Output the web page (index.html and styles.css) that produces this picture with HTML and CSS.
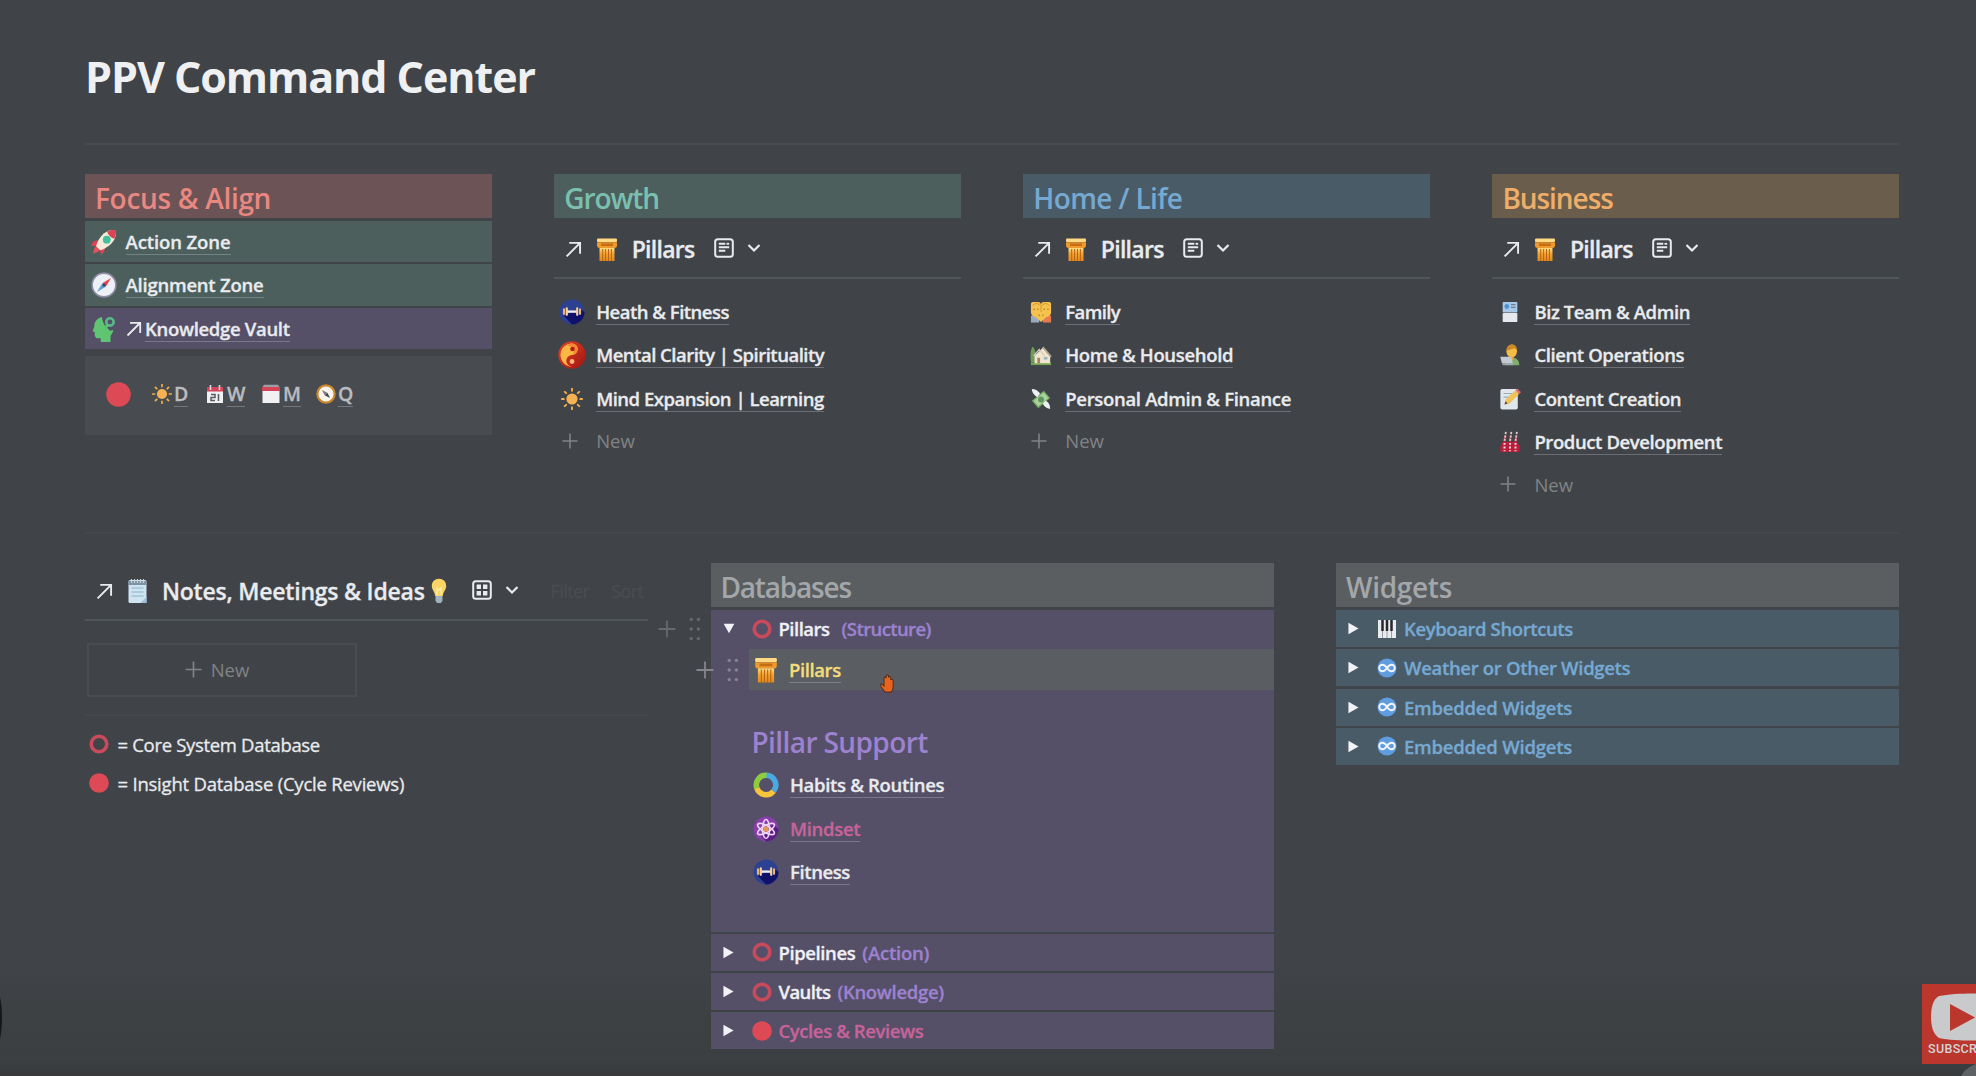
FILE: index.html
```html
<!DOCTYPE html>
<html lang="en">
<head>
<meta charset="utf-8">
<title>PPV Command Center</title>
<link rel="stylesheet" href="styles.css">
</head>
<body>
<svg class="defs" aria-hidden="true">
  <defs>
    <linearGradient id="gold" x1="0" y1="0" x2="0" y2="1"><stop offset="0" stop-color="#ffdc80"/><stop offset=".45" stop-color="#f3a32f"/><stop offset="1" stop-color="#e48a1c"/></linearGradient>
    <linearGradient id="yinred" x1="0" y1="0" x2="1" y2="1"><stop offset="0" stop-color="#e8442a"/><stop offset="1" stop-color="#9d1410"/></linearGradient>
  </defs>
  <symbol id="arrow" viewBox="0 0 16 16"><path d="M1.5 14.5 14 2M4 1.8h10.2V12" fill="none" stroke="currentColor" stroke-width="1.8"/></symbol>
  <symbol id="chev" viewBox="0 0 14 10"><path d="M1.5 2 7 7.5 12.5 2" fill="none" stroke="currentColor" stroke-width="2.2"/></symbol>
  <symbol id="plus" viewBox="0 0 18 18"><path d="M9 .5v17M.5 9h17" fill="none" stroke="currentColor" stroke-width="1.8"/></symbol>
  <symbol id="list" viewBox="0 0 20 20"><rect x="1.2" y="1.2" width="17.6" height="17.6" rx="2.6" fill="none" stroke="currentColor" stroke-width="2"/><path d="M4.800 5.800h6.500M4.800 9.300h10.400M4.800 12.800h6.500" stroke="currentColor" stroke-width="1.900"/><path d="M12.500 5.800h2.700" stroke="currentColor" stroke-width="1.900"/></symbol>
  <symbol id="grid" viewBox="0 0 20 20"><rect x="1.2" y="1.2" width="17.6" height="17.6" rx="2.6" fill="none" stroke="currentColor" stroke-width="2"/><path d="M4.6 4.6h4.4V9H4.6zM11 4.6h4.4V9H11zM4.6 11h4.4v4.4H4.6zM11 11h4.4v4.4H11z" fill="currentColor"/></symbol>
  <symbol id="dots" viewBox="0 0 12 24"><g fill="currentColor"><circle cx="2.2" cy="2.4" r="1.7"/><circle cx="9.4" cy="2.4" r="1.7"/><circle cx="2.2" cy="12" r="1.7"/><circle cx="9.4" cy="12" r="1.7"/><circle cx="2.2" cy="21.600" r="1.7"/><circle cx="9.4" cy="21.600" r="1.7"/></g></symbol>
  <symbol id="tri" viewBox="0 0 12 14"><path d="M.5.8 11.5 7 .5 13.2z" fill="#f1f3f6"/></symbol>
  <symbol id="tridown" viewBox="0 0 14 12"><path d="M.8.5h12.4L7 11.5z" fill="#f1f3f6"/></symbol>
  <symbol id="ring" viewBox="0 0 20 20"><circle cx="10" cy="10" r="7.8" fill="none" stroke="#c94a5c" stroke-width="3.6"/></symbol>
  <symbol id="disc" viewBox="0 0 20 20"><circle cx="10" cy="10" r="9.8" fill="#dd4a56"/></symbol>
  <symbol id="pillar" viewBox="0 0 22 24"><rect x="1" y="1" width="20" height="3.6" rx="1" fill="#ffd984"/><path d="M1 4.8h20v3.4a2.6 2.6 0 0 1-2.8 2.4H3.800A2.600 2.600 0 0 1 1 8.200z" fill="#ee9a2c"/><path d="M5 6h12v2.500H5z" fill="#c66c14"/><path d="M3.500 10.500h15V23.500h-15z" fill="url(#gold)"/><path d="M6.700 11.500v12M9.600 11.500v12M12.500 11.500v12M15.400 11.500v12" stroke="#b86315" stroke-width="1"/></symbol>
  <symbol id="rocket" viewBox="0 0 28 28"><path d="M7 12C3 12 1 15 .5 18l6 .5zM15 20c0 4-1.500 6-4 8l-1.500-6z" fill="#dc4453"/><path d="M6 18c-2.500 2-3.500 5-3.500 8 3 0 6-1.500 7.500-4z" fill="#e0525f"/><path d="M26.800 1.200C18 0 11 5 6.500 15l-1 3.500 4.500 4.500 3.500-1.200C23 17 28 10 26.800 1.200z" fill="#f2ead6"/><path d="M26.800 1.200c-4-.5-7 .2-9.500 1.600 1.200 3.800 4 6.600 7.800 7.800 1.500-2.800 2.200-6 1.700-9.400z" fill="#dc4453"/><circle cx="17" cy="11.500" r="4.200" fill="#42bfa0"/></symbol>
  <symbol id="compass" viewBox="0 0 24 24"><circle cx="12" cy="12" r="11" fill="#eef0f8" stroke="#8b8aa0" stroke-width="1.500"/><path d="M18.500 5.500 13.600 13.600l-3.200-3.200z" fill="#e2434f"/><path d="M5.500 18.500 10.400 10.400l3.200 3.200z" fill="#5fa2d8"/><circle cx="12" cy="12" r="1.500" fill="#3a4568"/></symbol>
  <symbol id="head" viewBox="0 0 22 24"><path d="M9 1C5 2 2 5 2 10L.5 14l2 1v3.500l1.500 2h4V24h9v-5.500c1.500-2 2.500-4 2.500-5.500l-3 .5-4-4c-2-2-3-5-3.500-8.500z" fill="#5fc573"/><circle cx="16.500" cy="5.500" r="3.400" fill="none" stroke="#58b98a" stroke-width="2.400"/><path d="m14.500 8-3.500 5" stroke="#5fc573" stroke-width="2.400"/></symbol>
  <symbol id="sun" viewBox="0 0 22 22"><circle cx="11" cy="11" r="5.600" fill="#f5b252"/><path d="M11 .8v2M11 19.200v2M.8 11h2M19.200 11h2M3.800 3.800l1.400 1.400M16.800 16.800l1.400 1.400M3.800 18.200l1.400-1.400M16.800 5.200l1.400-1.400" stroke="#f0b04b" stroke-width="1.900" stroke-linecap="round"/></symbol>
  <symbol id="cal" viewBox="0 0 18 20"><path d="M1 3h16v5H1z" fill="#d64258"/><path d="M1 7.500h16V19H1z" fill="#f0f0f2"/><path d="M4.500 1v5M13.500 1v5" stroke="#dcdde2" stroke-width="1.600"/><path d="M5 10.500h4v3H5v3h4M12.500 10v7" fill="none" stroke="#555b63" stroke-width="1.500"/></symbol>
  <symbol id="tearcal" viewBox="0 0 20 20"><path d="M3 .8h14l2 3H1z" fill="#9aa0a5"/><path d="M1 3h18v4H1z" fill="#d64258"/><path d="M1.500 7h17v12h-17z" fill="#f1f1f3"/></symbol>
  <symbol id="navcomp" viewBox="0 0 22 22"><circle cx="11" cy="11" r="9.500" fill="#fbf5ea" stroke="#c9872f" stroke-width="2.400"/><path d="m6.500 6.500 6 3-3 3z" fill="#777e8d"/><path d="m15.500 15.500-6-3 3-3z" fill="#3f4553"/></symbol>
  <symbol id="gym" viewBox="0 0 26 26"><circle cx="13" cy="13" r="12.500" fill="#2d4193"/><path d="M5 17 20 9l5.500 4A12.500 12.500 0 0 1 13 25.500z" fill="#10126a"/><path d="M8 12.600h10" stroke="#f1ecec" stroke-width="2.400"/><path d="M5 10.400v4.400M21 10.400v4.400" stroke="#e5b375" stroke-width="2.200" stroke-linecap="round"/><path d="M7.800 9.400v6.400M18.200 9.400v6.400" stroke="#f4d29d" stroke-width="2.200" stroke-linecap="round"/></symbol>
  <symbol id="yin" viewBox="0 0 28 28"><circle cx="14" cy="14" r="13.700" fill="url(#yinred)"/><path d="M14 2.500a5.750 5.750 0 0 1 0 11.500 5.750 5.750 0 0 0 0 11.500A11.500 11.500 0 0 1 14 2.500z" fill="#fdb843"/><path d="M9 4.500A5.750 5.750 0 0 1 14 2.500a5.750 5.750 0 0 1 0 11.500c3-2.500 3.500-8-5-9.500z" fill="#f58a35"/><circle cx="14.500" cy="8" r="2.300" fill="#b02018"/><circle cx="14" cy="20.500" r="2.400" fill="#ffb27a"/></symbol>
  <symbol id="family" viewBox="0 0 24 24"><path d="M1 16h9v7.500H1z" fill="#9aaac0"/><path d="M14 16h9v7.500h-9z" fill="#e87a50"/><path d="M3 1h6c2 0 3 1.500 3 3 0-1.500 1-3 3-3h6c1.500 0 2 1 2 2.500V12c0 3-2 5-5 5.500L12 23l-6-5.500C3 17 1 15 1 12V3.500C1 2 1.500 1 3 1z" fill="#f6c24e"/><path d="M3 5c2-3 6-3 7.500-.5M13.500 4.500C15 2 19 2 21 5M12 4v8" stroke="#dd9c30" fill="none" stroke-width="1.200"/><path d="M4.500 9h.1M8.500 9h.1M15.500 9h.1M19.500 9h.1M10 15.500h.1M14 15.500h.1" stroke="#a87226" stroke-width="1.500" stroke-linecap="round"/></symbol>
  <symbol id="house" viewBox="0 0 24 24"><path d="M1 20C0 10 1 5 3 3c3 3 4 8 4 17z" fill="#6f9c58"/><path d="M1 20h22v3H1z" fill="#74a552"/><path d="M5 13 14 4l8 9v8H5z" fill="#f0e5cf"/><path d="m4 13 6-7 6 7" fill="none" stroke="#d5cfc0" stroke-width="1.500"/><path d="M14 3.500 23 14" stroke="#b3a693" stroke-width="2"/><path d="M8 15h3v6H8z" fill="#aa8060"/><path d="M15 14h4v3h-4z" fill="#9db5bd"/></symbol>
  <symbol id="money" viewBox="0 0 24 24"><path d="m2 14 13-11 7 8L9 22z" fill="#77aa6b"/><path d="m4 14 11-9 5 6L9 20z" fill="#a8d49a"/><circle cx="12" cy="12.500" r="3.200" fill="#5f9463"/><path d="M2 1c4 0 7 2 9 5l-3 4C5 8 2 5 2 1zM22 23c-4-1-7-3-8-6l3-3c4 2 5 5 5 9z" fill="#edf0f3"/></symbol>
  <symbol id="idcard" viewBox="0 0 18 24"><rect x="1" y="1" width="16" height="11.500" rx="1" fill="#a9c9ea"/><circle cx="5.500" cy="6" r="2.600" fill="#4f92d4"/><path d="M10 4h5M10 7h5" stroke="#6e7d90" stroke-width="1.500"/><rect x="1" y="13" width="16" height="10" rx="1" fill="#e5e8ee"/></symbol>
  <symbol id="tech" viewBox="0 0 24 26"><path d="M6 25c0-6 3-9 8-9s9 3 9 9z" fill="#7fae6b"/><ellipse cx="14" cy="8.500" rx="6.200" ry="7.800" fill="#f2bc45"/><path d="M8 8c0-9 12-10 12.200-1L17 5z" fill="#c98a24"/><path d="M12 15h4v4h-4z" fill="#e5a73a"/><path d="M.5 15h13l2 8H2.500z" fill="#c3c9d0"/><path d="M3 23h13v2H3z" fill="#9ca5ae"/></symbol>
  <symbol id="memo" viewBox="0 0 24 24"><rect x="1.500" y="1" width="19" height="22.500" rx="2" fill="#dfe6ec"/><path d="M5 6h10M5 10h7" stroke="#9dacb8" stroke-width="1.300"/><path d="m6 18 1.500-6L18 2.500l4 4L11.500 17z" fill="#efc35a"/><path d="m6 18 1-3.500 2.500 2.500z" fill="#5a4a38"/><path d="m18 2.500 2-2 4 4-2 2z" fill="#e36a70"/></symbol>
  <symbol id="factory" viewBox="0 0 22 24"><path d="M5 12 6 5M11 12l1-7M17 12l1-7" stroke="#b02a42" stroke-width="2.600"/><path d="M6.500 1 5 11M12.500 1 11 11M18.500 1 17 11" stroke="#dfc6ca" stroke-width="2" stroke-dasharray="2.500 1.200"/><path d="M3 12h16l2.500 5v6H.5v-6z" fill="#b91f3a"/><path d="M5 13v9M11 13v9M17 13v9" stroke="#f1d9de" stroke-width="2.200" stroke-dasharray="2 2"/></symbol>
  <symbol id="notepad" viewBox="0 0 20 26"><rect x="1" y="2" width="18" height="23" rx="1.500" fill="#cfe3f1"/><path d="M1 3h18v4H1z" fill="#7d93a4"/><path d="M4 1v4M7 1v4M10 1v4M13 1v4M16 1v4" stroke="#c7d2da" stroke-width="1.200"/><path d="M4 10h12M4 14h12M4 18h12" stroke="#8cb3ce" stroke-width="1.200"/><path d="m13 25 6-6v6z" fill="#9cc0dc"/></symbol>
  <symbol id="bulb" viewBox="0 0 16 26"><path d="M8 .8c4.200 0 7.200 3 7.200 7.200 0 4-3 5.500-3.400 10H4.200C3.800 13.500.8 12 .8 8 .8 3.800 3.800.8 8 .8z" fill="#fbd465"/><path d="M6 17V10l2 2 2-2v7" fill="none" stroke="#fff0b0" stroke-width="1.300"/><path d="M4.500 18h7v4.500L10 25H6l-1.500-2.500z" fill="#9fb2bf"/></symbol>
  <symbol id="habit" viewBox="0 0 26 26"><g fill="none" stroke-width="5.600"><path d="M13 3.300A9.700 9.700 0 0 1 20.500 19.200" stroke="#4aa9e0"/><path d="M20.500 19.200A9.700 9.700 0 0 1 3.800 16" stroke="#f6c53c"/><path d="M3.900 16.200A9.700 9.700 0 0 1 13.500 3.300" stroke="#8fcb3f"/></g></symbol>
  <symbol id="atom" viewBox="0 0 26 26"><circle cx="13" cy="13" r="12.500" fill="#8a3eac"/><path d="m8 20 12-12 5.500 5A12.500 12.500 0 0 1 13 25.500z" fill="#5c1d80"/><g fill="none" stroke="#ecd4f6" stroke-width="1.600"><ellipse cx="13" cy="13" rx="3.500" ry="9.500"/><ellipse cx="13" cy="13" rx="3.500" ry="9.500" transform="rotate(60 13 13)"/><ellipse cx="13" cy="13" rx="3.500" ry="9.500" transform="rotate(120 13 13)"/></g><circle cx="13" cy="13" r="2.600" fill="#e7964a"/></symbol>
  <symbol id="piano" viewBox="0 0 20 20"><rect x="1" y="1" width="18" height="18" fill="#e9ebee"/><path d="M5.500 1v11M10 1v11M14.500 1v11" stroke="#26282c" stroke-width="2.500"/><path d="M5.500 12v7M10 12v7M14.500 12v7" stroke="#85898f" stroke-width=".8"/></symbol>
  <symbol id="inf" viewBox="0 0 20 20"><circle cx="10" cy="10" r="9.500" fill="#5f9de0"/><path d="M10 10c-2-3-3-3.200-4.600-3.200a3.200 3.200 0 0 0 0 6.400C7 13.200 8 13 10 10s3-3.200 4.600-3.200a3.200 3.200 0 0 1 0 6.400C13 13.200 12 13 10 10z" fill="none" stroke="#f2f6fc" stroke-width="1.900"/></symbol>
</svg>

<main class="page">
  <h1 class="title">PPV Command Center</h1>

  <section class="board four">
    <div class="col">
      <h2 class="band red">Focus &amp; Align</h2>
      <a class="bar green"><svg class="pic"><use href="#rocket"/></svg><span class="link t1">Action Zone</span></a>
      <a class="bar green mid"><svg class="pic"><use href="#compass"/></svg><span class="link t2">Alignment Zone</span></a>
      <a class="bar purple"><svg class="pic"><use href="#head"/></svg><svg class="mini"><use href="#arrow"/></svg><span class="link t3">Knowledge Vault</span></a>
      <div class="callout">
        <svg class="rec"><use href="#disc"/></svg>
        <span class="cyc"><svg><use href="#sun"/></svg><span>D</span></span>
        <span class="cyc week"><svg><use href="#cal"/></svg><span>W</span></span>
        <span class="cyc month"><svg><use href="#tearcal"/></svg><span>M</span></span>
        <span class="cyc"><svg><use href="#navcomp"/></svg><span>Q</span></span>
      </div>
    </div>

    <div class="col">
      <h2 class="band green t10">Growth</h2>
      <div class="view"><svg class="arr"><use href="#arrow"/></svg><svg class="pil"><use href="#pillar"/></svg><span class="t7">Pillars</span><svg class="kind"><use href="#list"/></svg><svg class="chev"><use href="#chev"/></svg></div>
      <ul class="list">
        <li><svg class="pic"><use href="#gym"/></svg><span class="link t5">Heath &amp; Fitness</span></li>
        <li><svg class="pic big"><use href="#yin"/></svg><span class="link t5">Mental Clarity | Spirituality</span></li>
        <li><svg class="pic em"><use href="#sun"/></svg><span class="link t5">Mind Expansion | Learning</span></li>
        <li class="new"><svg><use href="#plus"/></svg><span>New</span></li>
      </ul>
    </div>

    <div class="col">
      <h2 class="band blue t6">Home / Life</h2>
      <div class="view"><svg class="arr"><use href="#arrow"/></svg><svg class="pil"><use href="#pillar"/></svg><span class="t7">Pillars</span><svg class="kind"><use href="#list"/></svg><svg class="chev"><use href="#chev"/></svg></div>
      <ul class="list">
        <li><svg class="pic em"><use href="#family"/></svg><span class="link t6">Family</span></li>
        <li><svg class="pic em"><use href="#house"/></svg><span class="link t3">Home &amp; Household</span></li>
        <li><svg class="pic em"><use href="#money"/></svg><span class="link t3">Personal Admin &amp; Finance</span></li>
        <li class="new"><svg><use href="#plus"/></svg><span>New</span></li>
      </ul>
    </div>

    <div class="col">
      <h2 class="band orange t10">Business</h2>
      <div class="view"><svg class="arr"><use href="#arrow"/></svg><svg class="pil"><use href="#pillar"/></svg><span class="t7">Pillars</span><svg class="kind"><use href="#list"/></svg><svg class="chev"><use href="#chev"/></svg></div>
      <ul class="list">
        <li><svg class="pic em"><use href="#idcard"/></svg><span class="link t4">Biz Team &amp; Admin</span></li>
        <li><svg class="pic em"><use href="#tech"/></svg><span class="link t4">Client Operations</span></li>
        <li><svg class="pic em"><use href="#memo"/></svg><span class="link t4">Content Creation</span></li>
        <li><svg class="pic em"><use href="#factory"/></svg><span class="link t4">Product Development</span></li>
        <li class="new"><svg><use href="#plus"/></svg><span>New</span></li>
      </ul>
    </div>
  </section>

  <section class="board three">
    <div class="col notes">
      <div class="view wide"><svg class="arr"><use href="#arrow"/></svg><svg class="pad"><use href="#notepad"/></svg><span class="t2">Notes, Meetings &amp; Ideas</span><svg class="bulb"><use href="#bulb"/></svg><svg class="kind"><use href="#grid"/></svg><svg class="chev"><use href="#chev"/></svg><span class="ghost">Filter</span><span class="ghost sort">Sort</span></div>
      <div class="newbox"><svg><use href="#plus"/></svg><span>New</span></div>
      <div class="legend">
        <p><svg><use href="#ring"/></svg><span class="t3">= Core System Database</span></p>
        <p><svg><use href="#disc"/></svg><span class="t2">= Insight Database (Cycle Reviews)</span></p>
      </div>
    </div>

    <div class="col">
      <h2 class="band gray t12">Databases</h2>
      <div class="open purple">
        <div class="toggle"><span class="handle outer"><svg><use href="#plus"/></svg><svg class="dots"><use href="#dots"/></svg></span><svg class="tri down"><use href="#tridown"/></svg><svg class="mark"><use href="#ring"/></svg><b class="t5">Pillars</b><i class="wide-gap t6">(Structure)</i></div>
        <div class="nested">
          <div class="hit"><span class="handle inner"><svg><use href="#plus"/></svg><svg class="dots"><use href="#dots"/></svg></span><svg class="pic"><use href="#pillar"/></svg><span class="link t4">Pillars</span>
            <svg class="hand" viewBox="0 0 18 22"><path d="M6 21 1 14c-1-2 1-3 2.500-1.500L5 14V5c0-2 2.500-2 2.500 0V2.500c0-2 2.700-2 2.700 0V4c.3-1.500 2.600-1.300 2.600.5V7c.4-1.500 2.700-1 2.700 1v7c0 3-1 4-2 6z" fill="#e8641e" stroke="#55301c" stroke-width="1.200"/></svg>
          </div>
          <h3 class="t6">Pillar Support</h3>
          <ul class="list">
            <li><svg class="pic"><use href="#habit"/></svg><span class="link t3">Habits &amp; Routines</span></li>
            <li class="pink"><svg class="pic"><use href="#atom"/></svg><span class="link t3">Mindset</span></li>
            <li><svg class="pic"><use href="#gym"/></svg><span class="link t4">Fitness</span></li>
          </ul>
        </div>
      </div>
      <div class="toggle purple"><svg class="tri"><use href="#tri"/></svg><svg class="mark"><use href="#ring"/></svg><b class="t4">Pipelines</b><i class="t2">(Action)</i></div>
      <div class="toggle purple"><svg class="tri"><use href="#tri"/></svg><svg class="mark"><use href="#ring"/></svg><b class="t6">Vaults</b><i class="t3">(Knowledge)</i></div>
      <div class="toggle purple"><svg class="tri"><use href="#tri"/></svg><svg class="mark"><use href="#disc"/></svg><b class="pinktext t4">Cycles &amp; Reviews</b></div>
    </div>

    <div class="col widgets">
      <h2 class="band gray">Widgets</h2>
      <div class="toggle blue"><svg class="tri"><use href="#tri"/></svg><svg class="mark"><use href="#piano"/></svg><b class="t4">Keyboard Shortcuts</b></div>
      <div class="toggle blue"><svg class="tri"><use href="#tri"/></svg><svg class="mark"><use href="#inf"/></svg><b class="t3">Weather or Other Widgets</b></div>
      <div class="toggle blue"><svg class="tri"><use href="#tri"/></svg><svg class="mark"><use href="#inf"/></svg><b class="t2">Embedded Widgets</b></div>
      <div class="toggle blue"><svg class="tri"><use href="#tri"/></svg><svg class="mark"><use href="#inf"/></svg><b class="t2">Embedded Widgets</b></div>
    </div>
  </section>
</main>

<div class="edge"></div>
<div class="bubble"></div>
<div class="subscribe">
  <svg viewBox="0 0 62 50"><path d="M10 3C24 0 48 0 62 1v46c-14 1-38 1-52-2C4 41 2 33 2 24S4 6 10 3z" fill="#c9cacb"/><path d="M21 11v27l25-13.500z" fill="#bb362d"/></svg>
  <span>SUBSCRIBE</span>
</div>
</body>
</html>
```
FILE: styles.css
```css
* { box-sizing: border-box; }
body {
  margin: 0;
  width: 1976px;
  height: 1076px;
  overflow: hidden;
  position: relative;
  background: linear-gradient(#404347 0, #404347 960px, #3c3f41 1060px, #37393b 1076px);
  color: #e9ebee;
  font-family: "Open Sans", "Noto Sans", sans-serif;
  font-size: 18.5px;
  font-weight: 600;
  white-space: nowrap;
}
.defs { position: absolute; width: 0; height: 0; }
svg { flex: none; display: block; }
h1, h2, h3, ul, p { margin: 0; padding: 0; list-style: none; }

.page { padding: 0 77px 0 85px; }
.title {
  height: 145px;
  padding-top: 48px;
  border-bottom: 2px solid #4a4d50;
  font-size: 43px;
  line-height: 58px;
  font-weight: 700;
  letter-spacing: -1.05px;
  color: #eff0f2;
}
.board { display: grid; column-gap: 62.5px; align-items: start; }
.four { grid-template-columns: repeat(4, 1fr); height: 389px; padding-top: 29px; border-bottom: 2px solid #45484b; }
.three { grid-template-columns: repeat(3, 1fr); padding-top: 29px; }
.col { min-width: 0; }

.band { height: 44px; padding-left: 10px; margin-bottom: 3px; font-size: 28px; line-height: 49px; font-weight: 600; letter-spacing: -.3px; }
.red { background: #6b5356; color: #e98781; }
.green { background: #4c5f5d; }
.band.green { color: #7bbfaf; }
.blue { background: #4a5b68; color: #76a9d2; }
.orange { background: #6b5d4b; color: #eeae69; }
.gray { background: #5a5e60; color: #a4a7aa; }
.purple { background: #555068; }

/* tracking steps, in tenths of a pixel */
.t1 { letter-spacing: -.1px; }
.t2 { letter-spacing: -.22px; }
.t3 { letter-spacing: -.32px; }
.t4 { letter-spacing: -.4px; }
.t5 { letter-spacing: -.5px; }
.t6 { letter-spacing: -.6px; }
.t7 { letter-spacing: -.7px; }
.t10 { letter-spacing: -1.050px; }
.t12 { letter-spacing: -1.200px; }

.bar { display: flex; align-items: center; height: 41px; margin-bottom: 2px; padding-left: 6px; }
.bar.mid { height: 42px; }
.pic { width: 26px; height: 26px; margin-right: 11px; }
.bar .pic { margin-right: 8.500px; }
.bar .mini { width: 16px; height: 16px; margin-right: 3.500px; }
.link { line-height: 25px; border-bottom: 1.500px solid rgba(200, 205, 215, .32); }
.link, .toggle b, .toggle i, .view span { -webkit-text-stroke: .3px currentColor; }

.callout { display: flex; align-items: center; height: 79px; margin-top: 7px; padding: 0 0 3px 21px; background: #484b4f; color: #b9bcc0; font-size: 19.500px; }
.rec { width: 25px; height: 25px; margin-right: 21px; }
.cyc { display: flex; align-items: center; width: 53px; }
.cyc.week { width: 56px; }
.cyc.month { width: 55px; }
.cyc svg { width: 20px; height: 20px; margin-right: 2px; }
.cyc span { line-height: 25px; border-bottom: 1.500px solid #74777b; -webkit-text-stroke: .3px currentColor; }

.view { display: flex; align-items: center; height: 58px; border-bottom: 2px solid #505557; padding-left: 11px; font-size: 23px; }
.arr { width: 17px; height: 17px; margin-right: 14px; }
.pil { width: 22px; height: 25px; margin-right: 13.500px; }
.kind { width: 20px; height: 20px; margin: 0 0 2px 19px; }
.chev { width: 14px; height: 10px; margin: 0 0 2px 13px; }

.list li { display: flex; align-items: center; height: 43.300px; padding-left: 5px; }
.col > .list { padding-top: 11.500px; }
.list .big { width: 28px; height: 28px; margin: 0 10px 0 -1px; }
.list .em { width: 22px; height: 22px; margin: 0 13px 0 2px; }
.list .new { height: 41px; color: #808386; font-weight: 400; }
.new svg { width: 16px; height: 16px; margin: 0 18px 0 3px; }

.pad { width: 21px; height: 26px; margin-right: 14px; }
.bulb { width: 16px; height: 26px; margin-left: 6px; }
.wide .kind { margin-left: 25px; }
.view .ghost { color: #4a4d50; font-size: 18px; font-weight: 400; margin-left: 32px; letter-spacing: -.6px; }
.view .sort { margin-left: 22px; }
.newbox { display: flex; align-items: center; justify-content: center; width: 270px; height: 54px; margin: 22px 0 0 2px; padding: 0 10px 2px 0; border: 2px solid #4a4d50; color: #808386; font-weight: 400; }
.newbox svg { width: 17px; height: 17px; margin-right: 9px; }
.legend { margin-top: 17px; padding-top: 8.500px; border-top: 2px solid #45484b; font-weight: 400; }
.legend p { display: flex; align-items: center; height: 39px; padding-left: 3.500px; }
.legend svg { width: 20px; height: 20px; margin-right: 9px; }
.legend span { -webkit-text-stroke: .3px currentColor; }

.toggle { position: relative; display: flex; align-items: center; height: 37px; margin-bottom: 2.300px; padding-left: 12px; }
.toggle b { font-weight: 600; color: #f0f1f5; }
.toggle i { font-style: normal; color: #9d82d0; margin-left: 7px; }
.toggle i.wide-gap { margin-left: 12px; }
.tri { width: 11px; height: 13px; margin: 0 18px 0 0; }
.tri.down { width: 12px; height: 11px; margin-right: 17px; }
.mark { width: 20px; height: 20px; margin-right: 7px; }
.toggle.blue b { color: #76a9d2; }
.toggle .pinktext { color: #c7639a; }
.open { height: 321.500px; margin-bottom: 2.300px; }
.nested { padding-left: 38px; }
.nested .list li { padding-left: 4.500px; }
.hit { position: relative; display: flex; align-items: center; height: 41px; padding-left: 5px; background: #5a5e62; color: #f3dd78; }
.hit .pic { width: 24px; margin-right: 11.500px; }
h3 { height: 73.500px; padding: 31px 0 0 3px; font-size: 28px; line-height: 42px; font-weight: 600; color: #9d82d0; }
.pink { color: #c7639a; }
.handle { position: absolute; display: flex; align-items: center; gap: 13px; top: 50%; transform: translateY(-50%); color: #66696d; }
.handle svg { width: 18px; height: 18px; }
.handle .dots { width: 12px; height: 24px; }
.outer { left: -53px; }
.inner { left: -53px; color: #84858f; }
.hand { position: absolute; left: 130px; top: 25px; width: 17px; height: 19px; }

.edge { position: absolute; left: -10px; top: 990px; width: 12px; height: 56px; border: 2px solid #15181a; border-radius: 50%; background: #777; }
.bubble { position: absolute; left: 1958px; top: 1063px; width: 50px; height: 50px; border-radius: 50%; background: #5f6264; }
.subscribe { position: absolute; left: 1922px; top: 984px; width: 54px; height: 80px; overflow: hidden; background: #bb362d; color: #d3d4d5; font: 500 12.500px/16px Roboto, sans-serif; letter-spacing: .35px; }
.subscribe svg { width: 62px; height: 50px; margin: 9px 0 0 7px; }
.subscribe span { display: block; padding-left: 6px; margin-top: -2px; }
```
